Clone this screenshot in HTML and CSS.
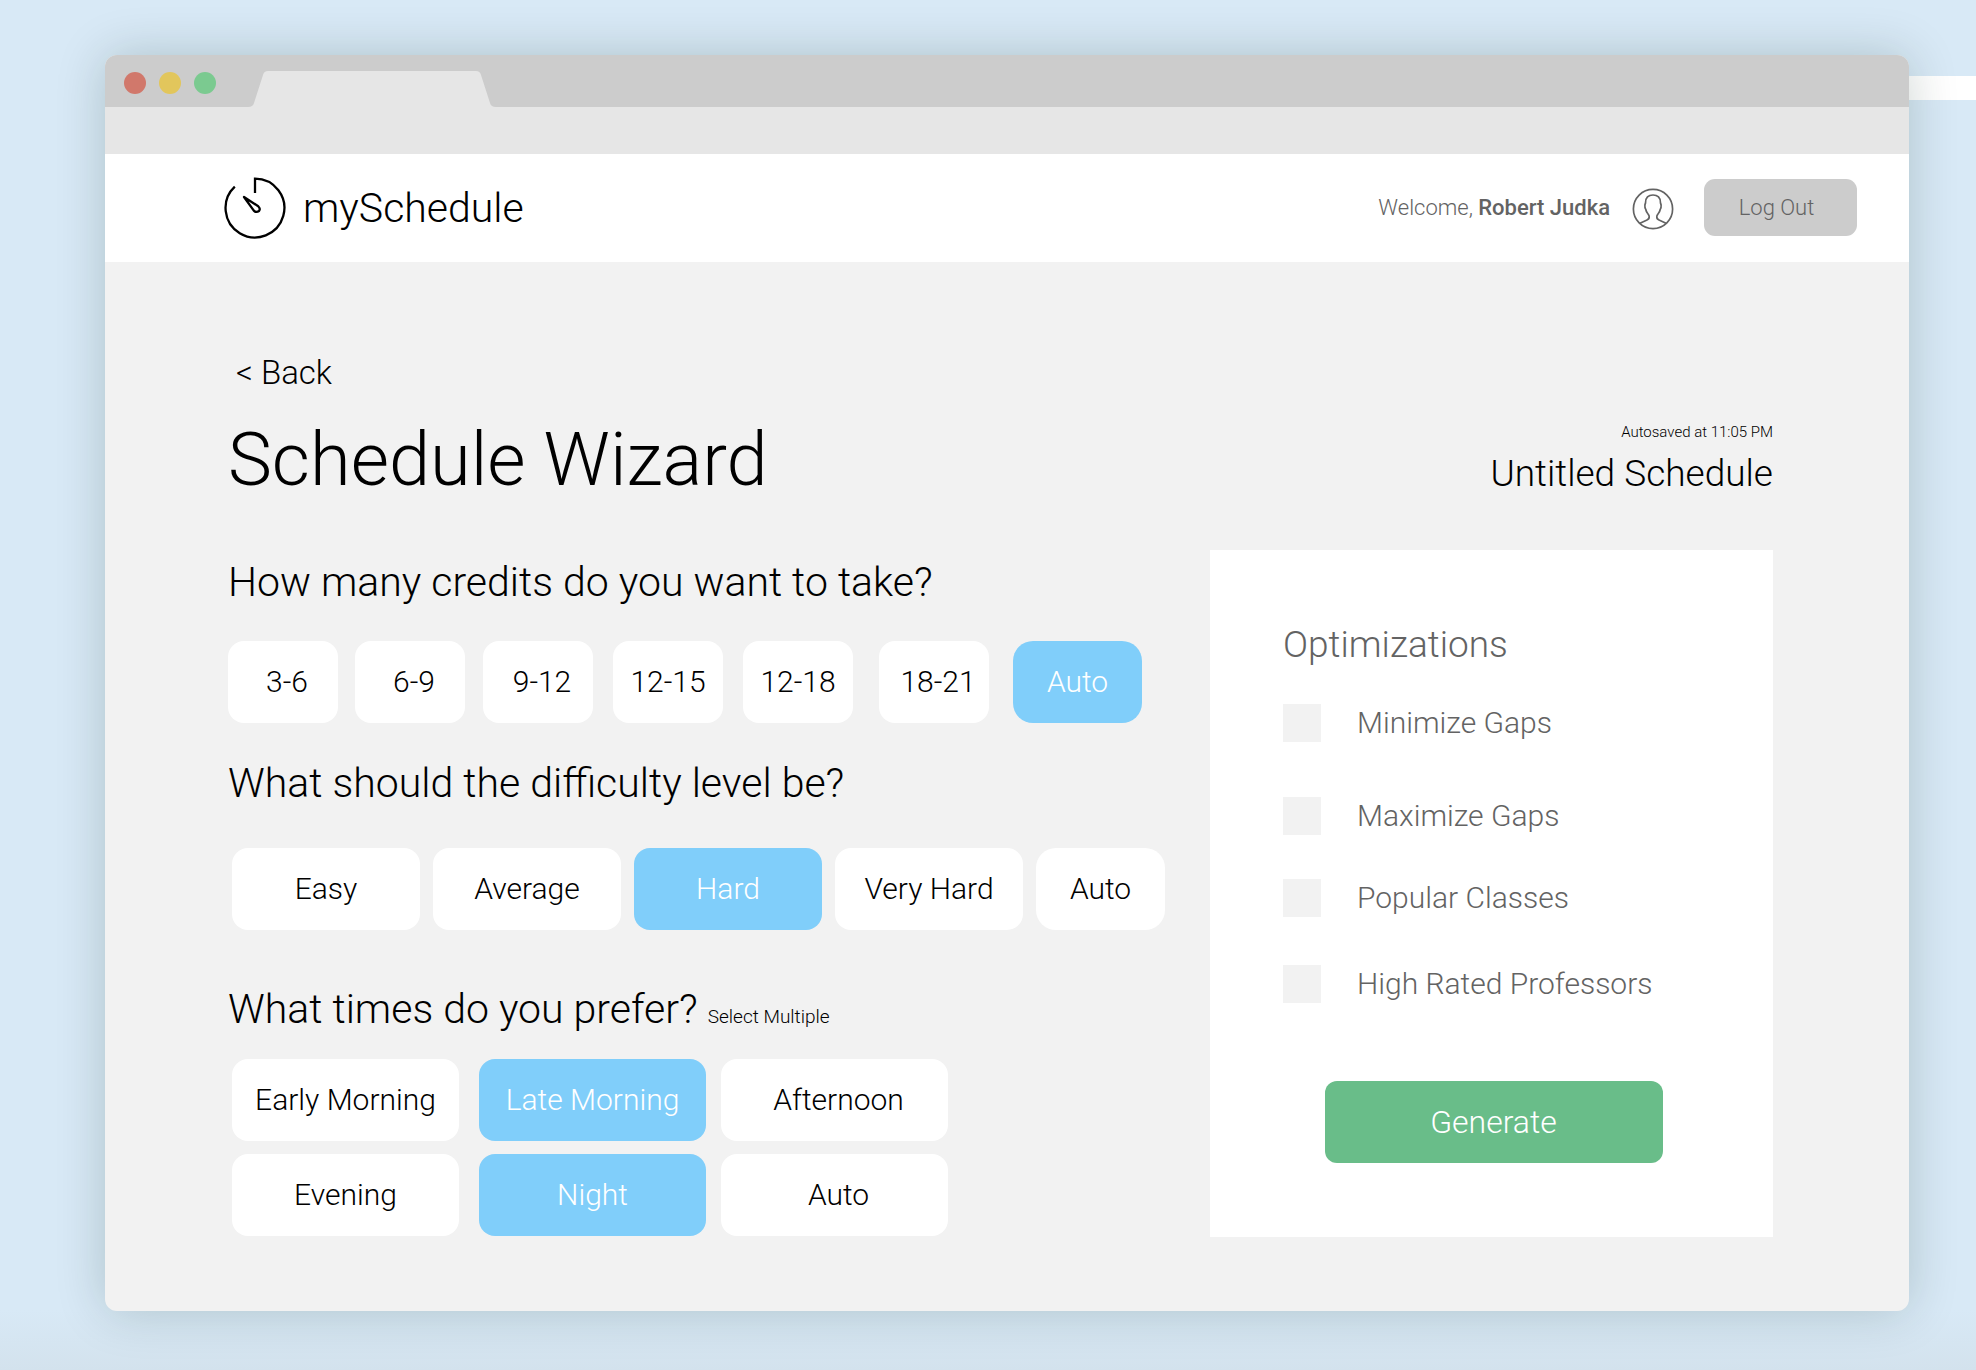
FILE: index.html
```html
<!DOCTYPE html>
<html lang="en">
<head>
  <meta charset="utf-8">
  <meta name="viewport" content="width=device-width, initial-scale=1">
  <title>mySchedule – Schedule Wizard</title>
  <link rel="stylesheet" href="styles.css">
</head>
<body>
  <div class="stripe"></div>
  <div class="window">
    <div class="titlebar">
      <div class="dots">
        <span class="dot dot-close"></span>
        <span class="dot dot-min"></span>
        <span class="dot dot-max"></span>
      </div>
      <svg class="tab" width="248" height="36" viewBox="0 0 248 36" aria-hidden="true">
        <path d="M0 36Q5 36 6 32L15 4Q16 0 20 0H228Q232 0 233 4L242 32Q243 36 248 36Z" fill="#e6e6e6"/>
      </svg>
    </div>
    <div class="toolbar"></div>

    <header class="header">
      <a class="brand" href="#">
        <svg width="62" height="62" viewBox="0 0 62 62" fill="none" stroke="#000" stroke-width="2.3" aria-hidden="true">
          <path d="M31 16V1.6A29.4 29.4 0 1 1 10.8 9.6" stroke-linejoin="miter"/>
          <path d="M20 20L34.2 29.2Q36.8 31.8 35 34Q32.200 36 29.800 33.600Z" stroke-linejoin="round"/>
        </svg>
        <span>mySchedule</span>
      </a>
      <div class="account">
        <span>Welcome, <b>Robert Judka</b></span>
        <svg class="avatar" width="42" height="42" viewBox="0 0 42 42" fill="none" stroke="#636363" stroke-width="1.700" aria-hidden="true">
          <circle cx="21" cy="21" r="19.600"/>
          <path d="M8 35.300L15 32Q17.400 31 17.200 28.500Q17.200 27.500 16 26Q14.200 24 13.800 21.500Q12.600 20.500 12.900 17Q13.200 15.600 13.500 15C13.300 9.500 16.500 7 21 7S28.700 9.500 28.500 15Q28.800 15.600 29.100 17Q29.400 20.500 28.200 21.500Q27.800 24 26 26Q24.800 27.500 24.800 28.500Q24.600 31 27 32L34 35.300"/>
        </svg>
        <button class="logout" type="button">Log Out</button>
      </div>
    </header>

    <main class="main">
      <a class="back" href="#">&lt; Back</a>
      <div class="title-row">
        <h1>Schedule Wizard</h1>
        <div class="doc">
          <p class="saved">Autosaved at 11:05 PM</p>
          <p class="doc-name">Untitled Schedule</p>
        </div>
      </div>

      <form class="wizard">
        <div class="questions">
          <h2 id="q-credits">How many credits do you want to take?</h2>
          <div class="choices credits" role="radiogroup" aria-labelledby="q-credits">
            <label class="choice lean"><input type="radio" name="credits">3-6</label>
            <label class="choice lean"><input type="radio" name="credits">6-9</label>
            <label class="choice lean"><input type="radio" name="credits">9-12</label>
            <label class="choice"><input type="radio" name="credits">12-15</label>
            <label class="choice"><input type="radio" name="credits">12-18</label>
            <label class="choice lean"><input type="radio" name="credits">18-21</label>
            <label class="choice auto"><input type="radio" name="credits" checked>Auto</label>
          </div>

          <h2 id="q-level">What should the difficulty level be?</h2>
          <div class="choices levels" role="radiogroup" aria-labelledby="q-level">
            <label class="choice"><input type="radio" name="level">Easy</label>
            <label class="choice"><input type="radio" name="level">Average</label>
            <label class="choice"><input type="radio" name="level" checked>Hard</label>
            <label class="choice"><input type="radio" name="level">Very Hard</label>
            <label class="choice auto"><input type="radio" name="level">Auto</label>
          </div>

          <h2 id="q-times">What times do you prefer? <small>Select Multiple</small></h2>
          <div class="choices times" role="group" aria-labelledby="q-times">
            <label class="choice"><input type="checkbox" name="times">Early Morning</label>
            <label class="choice"><input type="checkbox" name="times" checked>Late Morning</label>
            <label class="choice lean"><input type="checkbox" name="times">Afternoon</label>
            <label class="choice"><input type="checkbox" name="times">Evening</label>
            <label class="choice"><input type="checkbox" name="times" checked>Night</label>
            <label class="choice lean"><input type="checkbox" name="times">Auto</label>
          </div>
        </div>

        <section class="panel">
          <h3>Optimizations</h3>
          <div class="options">
            <label class="option"><input type="checkbox">Minimize Gaps</label>
            <label class="option"><input type="checkbox">Maximize Gaps</label>
            <label class="option"><input type="checkbox">Popular Classes</label>
            <label class="option"><input type="checkbox">High Rated Professors</label>
          </div>
          <button class="generate" type="button">Generate</button>
        </section>
      </form>
    </main>
  </div>
</body>
</html>
```
FILE: styles.css
```css
* { box-sizing: border-box; }

body {
  margin: 0;
  min-height: 100vh;
  padding: 55px 67px 59px 105px;
  position: relative;
  background: linear-gradient(to top, #d3e2ed, #d8e9f6 60px);
  font-family: Roboto, "Liberation Sans", sans-serif;
  font-weight: 300;
  color: #000;
}

h1, h2, h3, p { margin: 0; font-weight: 300; }
a { color: inherit; text-decoration: none; }
button { border: 0; font-family: inherit; font-weight: 300; cursor: pointer; }

/* White band that runs behind the window to the right edge */
.stripe {
  position: absolute;
  top: 76px;
  right: 0;
  width: 80px;
  height: 24px;
  background: #fff;
}

.window {
  position: relative;
  border-radius: 12px;
  overflow: hidden;
  background: #f2f2f2;
  box-shadow: 0 0 50px rgba(10, 40, 30, 0.2);
}

.titlebar {
  display: flex;
  justify-content: flex-start;
  align-items: flex-end;
  gap: 32px;
  height: 52px;
  padding-left: 19px;
  background: #ccc;
}
.dots { display: flex; gap: 13px; padding-bottom: 13px; }
.dot { width: 22px; height: 22px; border-radius: 50%; }
.dot-close { background: #d1786b; }
.dot-min { background: #e2c65c; }
.dot-max { background: #7bca90; }
.tab { display: block; }
.toolbar { height: 47px; background: #e6e6e6; }

.header {
  display: flex;
  justify-content: space-between;
  align-items: center;
  height: 108px;
  padding: 0 52px 0 119px;
  background: #fff;
}
.brand { display: flex; align-items: center; gap: 17px; font-size: 41px; line-height: 48px; }
.account {
  display: flex;
  align-items: center;
  font-size: 22px;
  line-height: 28px;
  color: #636363;
}
.account b { font-weight: 500; }
.avatar { margin: 2px 30px 0 22px; }
.logout {
  width: 153px;
  height: 57px;
  margin-bottom: 2px;
  padding: 0 14px 0 6px;
  border-radius: 11px;
  background: #ccc;
  color: #636363;
  font-size: 22px;
}

.main { padding: 91px 136px 74px 123px; }
.back { display: block; padding-left: 8px; font-size: 33px; line-height: 40px; }
.title-row {
  display: flex;
  justify-content: space-between;
  align-items: flex-end;
  margin: 23px 0 46px;
}
h1 { font-size: 74px; line-height: 88px; }
.doc { padding-bottom: 8px; text-align: right; }
.saved { margin-bottom: 10px; font-size: 15px; line-height: 20px; }
.doc-name { font-size: 37px; line-height: 44px; }

.wizard {
  display: grid;
  grid-template-columns: minmax(0, 1fr) 563px;
  gap: 46px;
}
.questions { padding-top: 8px; }
h2 { font-size: 41px; line-height: 48px; }
h2 small { font-size: 19px; line-height: 20px; }

.choices { display: grid; justify-content: start; }
.choice {
  position: relative;
  display: flex;
  align-items: center;
  justify-content: center;
  height: 82px;
  border-radius: 16px;
  background: #fff;
  font-size: 30px;
  line-height: 36px;
  cursor: pointer;
}
.choice input {
  position: absolute;
  inset: 0;
  margin: 0;
  border-radius: inherit;
  appearance: none;
  cursor: pointer;
}
.choice:has(:checked) { background: #80cefa; color: #fff; }
.auto { width: 129px; border-radius: 20px; }
.lean { padding-left: 8px; }

.credits {
  grid-template-columns: 127px 128px 130px 130px 136px 134px 129px;
  margin: 35px 0 36px;
}
.credits .choice:not(.auto) { width: 110px; }
.levels {
  grid-template-columns: repeat(4, 188px) 129px;
  gap: 13px;
  margin: 41px 0 55px;
  padding-left: 4px;
}
.times {
  grid-template-columns: 247px 242px 227px;
  row-gap: 13px;
  margin-top: 26px;
  padding-left: 4px;
}
.times .choice { width: 227px; }

.panel {
  display: flex;
  flex-direction: column;
  padding: 73px 69px 74px 73px;
  background: #fff;
  color: #636363;
}
h3 { font-size: 37px; line-height: 44px; }
.options {
  display: grid;
  grid-template-rows: 93px 82px 86px 38px;
  margin: 37px 0 78px;
}
.option {
  display: flex;
  align-items: center;
  align-self: start;
  gap: 36px;
  font-size: 30px;
  line-height: 36px;
}
.option input {
  width: 38px;
  height: 38px;
  margin: 0;
  appearance: none;
  background: #f2f2f2;
}
.option input:checked { background: #80cefa; }
.generate {
  align-self: center;
  width: 338px;
  height: 82px;
  border-radius: 12px;
  background: #69bd89;
  color: #fff;
  font-size: 32px;
}
```
